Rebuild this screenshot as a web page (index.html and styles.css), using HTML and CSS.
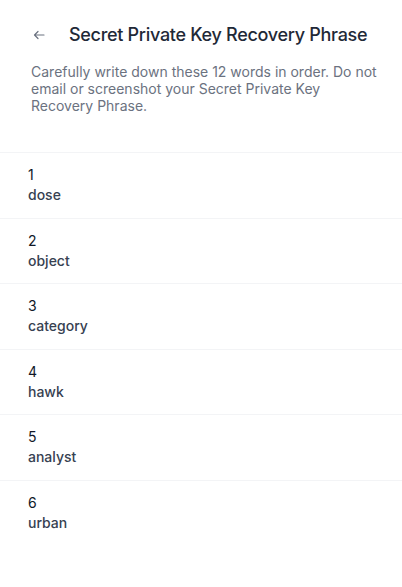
FILE: index.html
```html
<!DOCTYPE html>
<html>
<head>
<meta charset="utf-8">
<link rel="stylesheet" href="styles.css">
</head>
<body>
<div class="page">
  <header class="header">
    <button class="back" aria-label="Back">
      <svg width="12" height="10" viewBox="0 0 12 10" fill="none" stroke="currentColor" stroke-width="1.2" stroke-linecap="round" stroke-linejoin="round"><path d="M11 5H1.5M5 1.5L1.5 5L5 8.5"/></svg>
    </button>
    <h1 class="title">Secret Private Key Recovery Phrase</h1>
  </header>
  <p class="desc">Carefully write down these 12 words in order. Do not email or screenshot your Secret Private Key Recovery Phrase.</p>
  <ul class="words">
    <li class="row"><span class="num">1</span><span class="word">dose</span></li>
    <li class="row"><span class="num">2</span><span class="word">object</span></li>
    <li class="row"><span class="num">3</span><span class="word">category</span></li>
    <li class="row"><span class="num">4</span><span class="word">hawk</span></li>
    <li class="row"><span class="num">5</span><span class="word">analyst</span></li>
    <li class="row"><span class="num">6</span><span class="word">urban</span></li>
  </ul>
</div>
</body>
</html>
```
FILE: styles.css
```css
* { box-sizing: border-box; }
html, body { margin: 0; padding: 0; background: #ffffff; }
body { font-family: Inter, "Noto Sans", sans-serif; -webkit-font-smoothing: antialiased; }
.page { width: 402px; }
.header {
  display: flex;
  align-items: center;
  padding: 21px 16px 0 33px;
  height: 49px;
}
.back {
  border: 0; background: none; padding: 0; margin: 0;
  width: 13px; height: 12px;
  color: #6b7280;
  display: flex; align-items: center;
}
.title {
  margin: 0 0 0 23px;
  font-size: 18px;
  line-height: 28px;
  font-weight: 500;
  letter-spacing: -0.3px;
  color: #1f2937;
}
.desc {
  margin: 14px 0 0;
  padding: 0 24px 0 31px;
  font-size: 14px;
  line-height: 17px;
  color: #6b7280;
}
.words {
  list-style: none;
  margin: 38px 0 0;
  padding: 0;
}
.row {
  display: flex;
  flex-direction: column;
  height: 65.5px;
  padding: 12px 28px 0;
  border-top: 1px solid #f3f4f6;
}
.num {
  font-size: 14px;
  line-height: 20px;
  color: #111827;
}
.word {
  font-size: 14px;
  line-height: 20px;
  font-weight: 500;
  color: #374151;
}
```
